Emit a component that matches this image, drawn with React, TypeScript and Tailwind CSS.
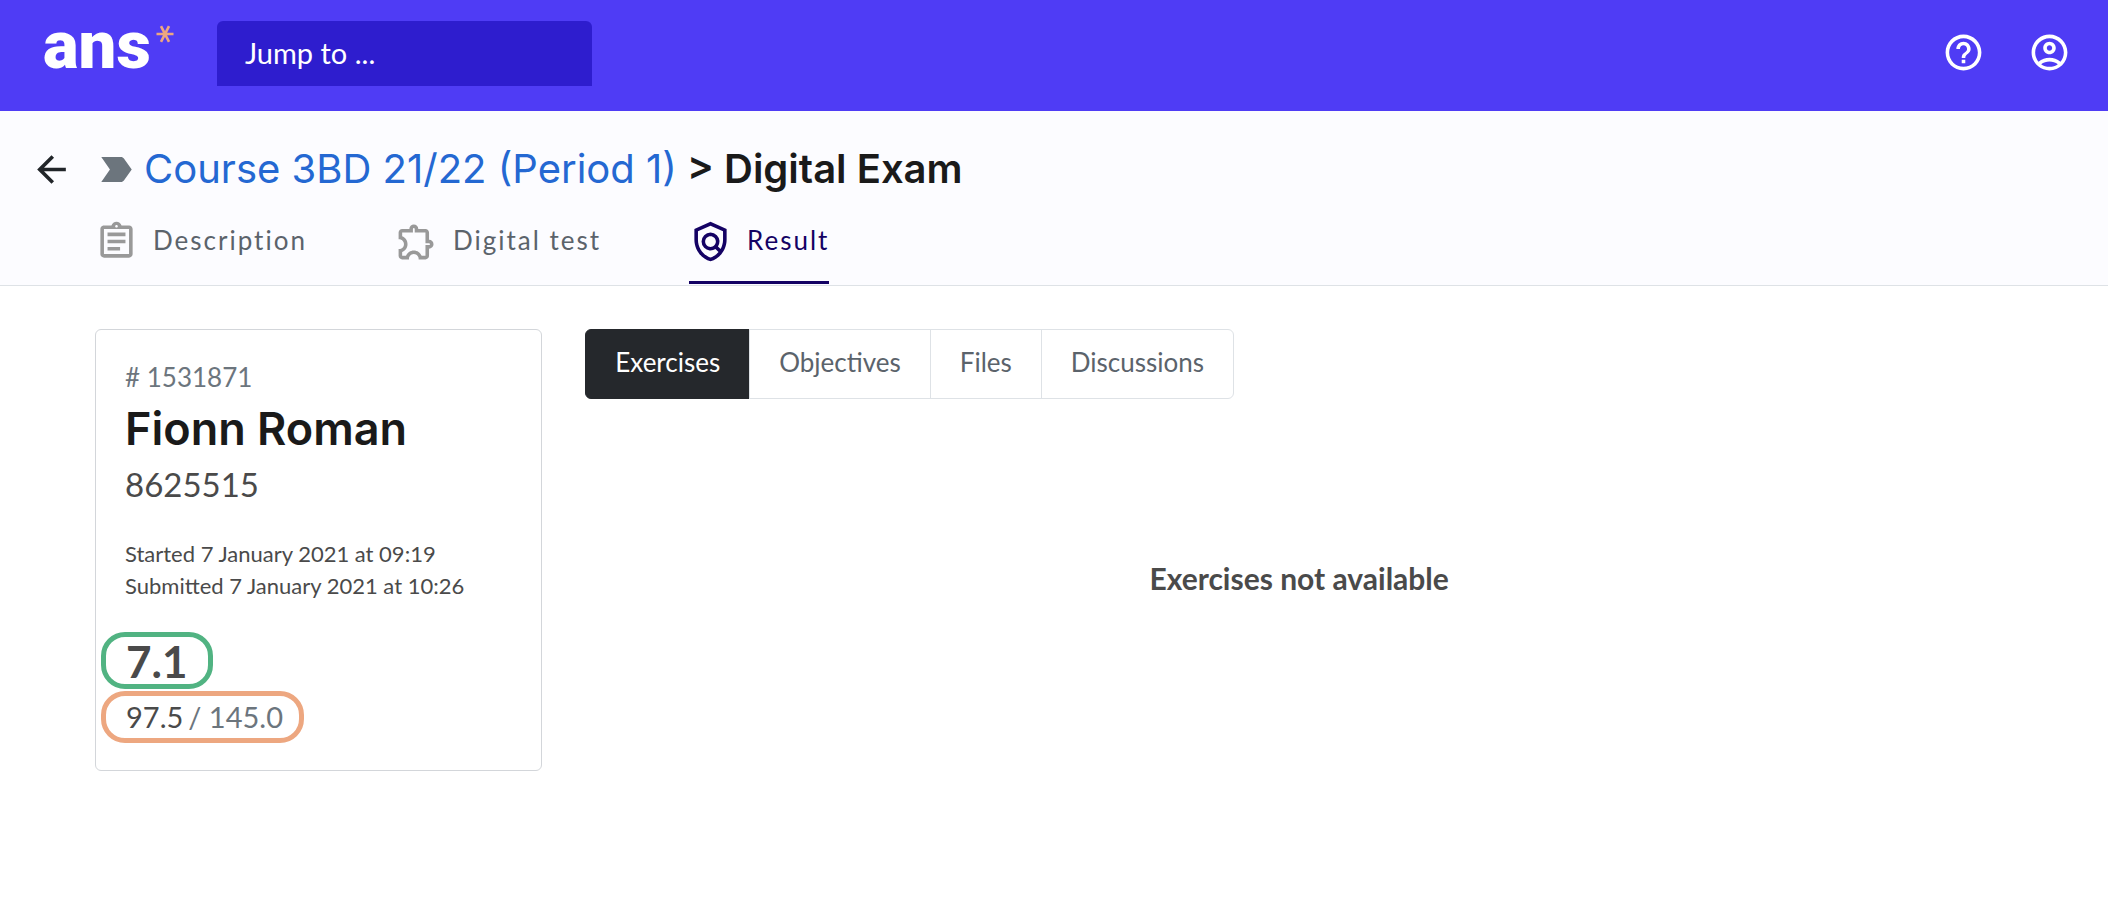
import {
  MdArrowBack,
  MdHelpOutline,
  MdLabelImportant,
  MdOutlineAccountCircle,
  MdOutlineAssignment,
  MdOutlineExtension,
  MdOutlinePolicy,
} from "react-icons/md";

const tabs = [
  { label: "Description", icon: MdOutlineAssignment, active: false },
  { label: "Digital test", icon: MdOutlineExtension, active: false },
  { label: "Result", icon: MdOutlinePolicy, active: true },
];

const views = ["Exercises", "Objectives", "Files", "Discussions"];

function Logo() {
  return (
    <a href="#" className="flex h-16 w-[131px] items-start justify-between text-white">
      <span className="font-[Roboto,sans-serif] text-[67px] leading-[50px] font-black">ans</span>
      <svg viewBox="0 0 18 18" className="mt-[5px] h-[18px] w-[18px]" stroke="#eda780" strokeWidth="2.6">
        <path d="M0.5 9h17M5 1.2l8 15.6M13 1.2l-8 15.6" />
      </svg>
    </a>
  );
}

function Navbar() {
  return (
    <header className="flex h-[111px] items-start bg-[#4f3cf5] pr-[37px] pl-[43px] text-white">
      <div className="pt-5">
        <Logo />
      </div>
      <input
        type="text"
        aria-label="Jump to"
        placeholder="Jump to ..."
        className="mt-[21px] ml-[43px] h-[65px] w-[375px] rounded-t-md bg-[#2e1dce] px-7 pb-[2px] text-[29px] text-white placeholder:text-white placeholder:opacity-100"
      />
      <div className="ml-auto flex gap-[43px] pt-[31px]">
        <button aria-label="Help">
          <MdHelpOutline size={43} />
        </button>
        <button aria-label="Account">
          <MdOutlineAccountCircle size={43} />
        </button>
      </div>
    </header>
  );
}

function PageHeader() {
  return (
    <div className="border-b border-[#dee2e6] bg-[#fcfcff] pt-7 pb-px">
      <div className="flex h-[60px] items-center pl-[30px]">
        <a href="#" aria-label="Back" className="text-[#212529]">
          <MdArrowBack size={43} />
        </a>
        <MdLabelImportant size={43} className="ml-[22px] text-[#6c757d]" />
        <h1 className="ml-[6px] font-[Inter,sans-serif] text-[40px] leading-[60px] font-semibold text-[#1a1a1a]">
          <a href="#" className="font-normal text-[#2468d2]">
            Course 3BD 21/22 (Period 1)
          </a>{" "}
          &gt; Digital Exam
        </h1>
      </div>
      <nav className="flex gap-[88px] pl-[95px]">
        {tabs.map(({ label, icon: Icon, active }) => (
          <a
            key={label}
            href="#"
            className={`flex h-[85px] items-center gap-[15px] border-b-[3px] pt-[3px] text-[26px] tracking-[2px] ${
              active ? "border-[#140264] text-[#140264]" : "border-transparent text-[#5b636b]"
            }`}
          >
            <Icon size={43} className={active ? "" : "text-[#999999]"} />
            <span className="pb-[2px]">{label}</span>
          </a>
        ))}
      </nav>
    </div>
  );
}

function StudentCard() {
  return (
    <section className="col-span-3 rounded-md border border-[#d3d6da] px-[29px] pt-[29px] pb-[27px] text-[#4a4a4a]">
      <p className="text-[26px] leading-9 text-[#6c757d]"># 1531871</p>
      <h2 className="font-[Inter,sans-serif] text-[45px] leading-[68px] font-semibold text-[#1a1a1a]">Fionn Roman</h2>
      <p className="text-[33px] leading-[42px]">8625515</p>
      <div className="mt-[33px] text-[22px] leading-8">
        <p>Started 7 January 2021 at 09:19</p>
        <p>Submitted 7 January 2021 at 10:26</p>
      </div>
      <div className="mt-[30px] -ml-6 flex flex-col items-start gap-[2px]">
        <p className="flex h-[57px] items-center rounded-3xl border-[5px] border-[#51b382] px-5 text-[44px] font-bold">
          7.1
        </p>
        <p className="flex h-[52px] items-center gap-[5px] rounded-3xl border-[5px] border-[#eda780] pr-4 pl-5 text-[29px]">
          97.5 <span className="text-[#6c757d]">/ 145.0</span>
        </p>
      </div>
    </section>
  );
}

function Results() {
  return (
    <section className="col-span-9">
      <div className="flex h-[70px]">
        {views.map((view, i) => (
          <button
            key={view}
            className={`border px-[29px] pb-1 text-[26px] first:rounded-l-md last:rounded-r-md ${
              i === 0 ? "border-[#25282c] bg-[#25282c] text-white" : "-ml-px border-[#dee2e6] text-[#5b636b]"
            }`}
          >
            {view}
          </button>
        ))}
      </div>
      <p className="pt-[159px] text-center text-[30px] leading-10 font-bold text-[#4a4a4a]">Exercises not available</p>
    </section>
  );
}

export default function App() {
  return (
    <div className="min-h-screen bg-white font-[Lato,sans-serif]">
      <Navbar />
      <PageHeader />
      <main className="grid grid-cols-12 gap-[43px] px-[95px] pt-[43px]">
        <StudentCard />
        <Results />
      </main>
    </div>
  );
}
